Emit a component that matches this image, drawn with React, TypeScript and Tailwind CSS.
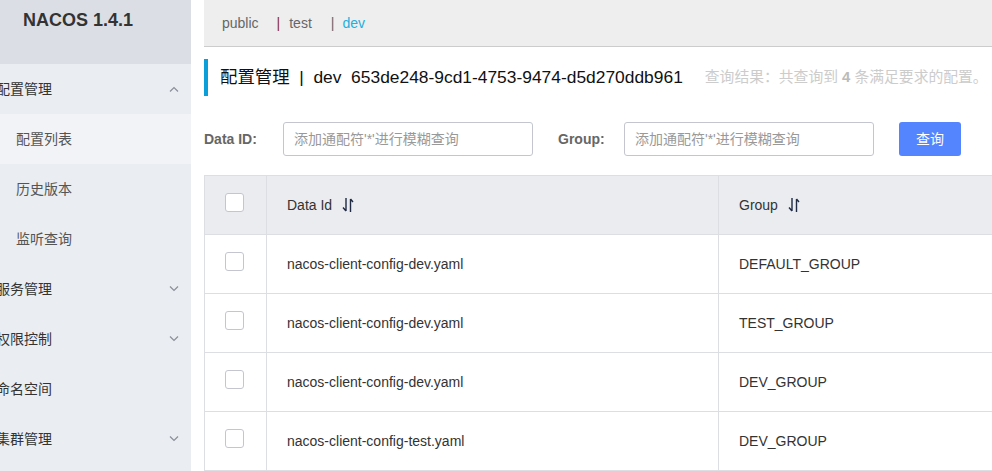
import React from 'react';

const menu = [
  { label: '配置管理', open: true, children: ['配置列表', '历史版本', '监听查询'] },
  { label: '服务管理', arrow: true },
  { label: '权限控制', arrow: true },
  { label: '命名空间' },
  { label: '集群管理', arrow: true },
];

const rows = [
  { dataId: 'nacos-client-config-dev.yaml', group: 'DEFAULT_GROUP' },
  { dataId: 'nacos-client-config-dev.yaml', group: 'TEST_GROUP' },
  { dataId: 'nacos-client-config-dev.yaml', group: 'DEV_GROUP' },
  { dataId: 'nacos-client-config-test.yaml', group: 'DEV_GROUP' },
];

const font = { fontFamily: '"Liberation Sans", "Noto Sans CJK SC", sans-serif' };

const Chevron = ({ up }: { up?: boolean }) => (
  <svg width="10" height="6" viewBox="0 0 10 6" fill="none" stroke="#8a8f99" strokeWidth="1.2">
    {up ? <path d="M1 5.5 L5 1.5 L9 5.5" /> : <path d="M1 0.5 L5 4.5 L9 0.5" />}
  </svg>
);

const SortIcon = () => (
  <svg width="12" height="16" viewBox="0 0 12 16" fill="none" stroke="#1f2a44" strokeWidth="1.4" className="ml-[10px]">
    <path d="M4 1 V14 M4 14 L1 10.5" />
    <path d="M8.5 15 V2 M8.5 2 L11 5" />
  </svg>
);

const Checkbox = () => (
  <div className="w-[19px] h-[19px] rounded-[3px] border border-[#c4c6cf] bg-white" />
);

const App = () => {
  return (
    <div className="w-[992px] h-[471px] overflow-hidden flex bg-white text-[14px]" style={font}>
      {/* Sidebar */}
      <div className="w-[191px] shrink-0 bg-[#eaedf1] flex flex-col">
        <div className="h-[64px] shrink-0 bg-[#dbdfe5] flex items-start pt-[9px] pl-[23px]">
          <span className="text-[18px] font-bold text-[#333] leading-[22px]">NACOS 1.4.1</span>
        </div>
        {menu.map((m, i) => (
          <div key={i}>
            <div className="h-[50px] flex items-center justify-between pr-[12px]">
              <span className="-ml-[4px] text-[#333]">{m.label}</span>
              {m.open && <Chevron up />}
              {m.arrow && <Chevron />}
            </div>
            {m.children?.map((c, j) => (
              <div key={j} className={`h-[50px] flex items-center pl-[16px] text-[#555] ${j === 0 ? 'bg-[#f2f3f6]' : ''}`}>
                {c}
              </div>
            ))}
          </div>
        ))}
      </div>

      {/* Main */}
      <div className="flex-1 ml-[13px] flex flex-col min-w-0">
        <div className="h-[47px] shrink-0 bg-[#eeeeee] border-b border-[#cccccc] flex items-center pl-[18px] text-[14px]">
          <span className="text-[#666]">public</span>
          <span className="ml-[18px] text-[#8b2c1b]">|</span>
          <span className="ml-[9px] text-[#666]">test</span>
          <span className="ml-[19px] text-[#666]">|</span>
          <span className="ml-[8px] text-[#22b0dd]">dev</span>
        </div>

        <div className="mt-[12px] h-[37px] border-l-[4px] border-[#0a9fd8] flex items-center pl-[12px] whitespace-nowrap">
          <span className="text-[17.4px] text-[#111]">配置管理&nbsp;&nbsp;|&nbsp;&nbsp;dev&nbsp;&nbsp;653de248-9cd1-4753-9474-d5d270ddb961</span>
          <span className="ml-[22px] text-[14.8px] text-[#cccccc]">
            查询结果：共查询到 <b className="text-[#bbbbbb]">4</b> 条满足要求的配置。
          </span>
        </div>

        <div className="mt-[26px] flex items-center h-[34px]">
          <span className="font-bold text-[#666] w-[79px]">Data ID:</span>
          <div className="w-[250px] h-[34px] border border-[#c4c6cf] rounded-[3px] flex items-center pl-[10px] text-[#999]">
            添加通配符'*'进行模糊查询
          </div>
          <span className="font-bold text-[#666] ml-[25px] w-[66px]">Group:</span>
          <div className="w-[250px] h-[34px] border border-[#c4c6cf] rounded-[3px] flex items-center pl-[10px] text-[#999]">
            添加通配符'*'进行模糊查询
          </div>
          <div className="ml-[25px] w-[62px] h-[34px] rounded-[3px] bg-[#5584ff] text-white flex items-center justify-center">
            查询
          </div>
        </div>

        <div className="mt-[19px] w-[900px] border-t border-l border-[#dcdee3]">
          <div className="flex h-[59px] bg-[#ebecf0] border-b border-[#dcdee3] text-[#333]">
            <div className="w-[62px] border-r border-[#dcdee3] flex justify-center pt-[17px] pr-[3px]">
              <Checkbox />
            </div>
            <div className="w-[452px] border-r border-[#dcdee3] flex items-center pl-[20px]">
              Data Id <SortIcon />
            </div>
            <div className="flex-1 flex items-center pl-[20px]">
              Group <SortIcon />
            </div>
          </div>
          {rows.map((r, i) => (
            <div key={i} className="flex h-[59px] border-b border-[#dcdee3] text-[#333]">
              <div className="w-[62px] border-r border-[#dcdee3] flex justify-center pt-[17px] pr-[3px]">
                <Checkbox />
              </div>
              <div className="w-[452px] border-r border-[#dcdee3] flex items-center pl-[20px]">{r.dataId}</div>
              <div className="flex-1 flex items-center pl-[20px]">{r.group}</div>
            </div>
          ))}
        </div>
      </div>
    </div>
  );
};

export default App;
